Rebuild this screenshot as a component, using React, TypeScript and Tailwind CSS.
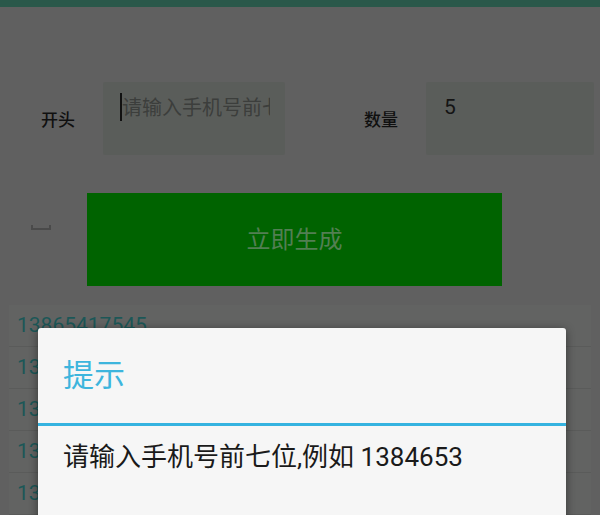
import React from "react";

const rows = ["13865417545", "13865413872", "13865419026", "13865412291", "13865418634"];

export default function App() {
  return (
    <div
      className="relative w-[600px] h-[515px] overflow-hidden bg-[#606060]"
      style={{ fontFamily: 'Roboto, "Noto Sans CJK SC", sans-serif' }}
    >
      <div className="h-[7px] bg-[#2a584a]" />
      <div className="mt-[75px] flex h-[73px] items-center">
        <div className="ml-[41px] w-[62px] pt-[3px] text-[17px] font-medium leading-none text-[#101010]">开头</div>
        <div className="flex h-[73px] w-[182px] items-start rounded-[2px] bg-[#5a5d5a] pl-[17px] pt-[11px]">
          <div className="h-[28px] w-[2px] bg-[#111]" />
          <div className="w-[148px] overflow-hidden whitespace-nowrap pt-[3px] text-[20px] leading-[24px] text-[#3c3e3c]">
            请输入手机号前七位
          </div>
        </div>
        <div className="ml-[79px] w-[62px] pt-[3px] text-[17px] font-medium leading-none text-[#101010]">数量</div>
        <div className="h-[73px] w-[168px] rounded-[2px] bg-[#5a5d5a] pl-[18px] pt-[13px] text-[21px] leading-[24px] text-[#141414]">
          5
        </div>
      </div>
      <div className="mt-[38px] flex h-[93px] items-center">
        <div className="ml-[31px] mt-[-25px] h-[5px] w-[20px] border-b-2 border-l-2 border-r-2 border-[#4a4a4a]" />
        <div className="ml-[36px] flex h-[93px] w-[415px] items-center justify-center bg-[#006300] text-[24px] text-[#527f53]">
          立即生成
        </div>
      </div>
      <div className="mx-[9px] mt-[19px] bg-[#626362]">
        {rows.map((r) => (
          <div
            key={r}
            className="flex h-[42px] items-center border-b border-[#5a5b5a] pl-[8px] text-[21px] text-[#1c5757]"
          >
            {r}
          </div>
        ))}
      </div>
      <div className="absolute left-[38px] top-[328px] h-[220px] w-[528px] rounded-[3px] bg-[#f6f6f6] shadow-[0_2px_10px_rgba(0,0,0,0.45)]">
        <div className="flex h-[95px] items-center pl-[25px] pt-[2px] text-[31px] text-[#3db5dd]">提示</div>
        <div className="h-[3px] bg-[#35b3e0]" />
        <div className="pl-[25px] pt-[16px] text-[26px] leading-[30px] text-[#1a1a1a]">
          请输入手机号前七位,例如 1384653
        </div>
      </div>
    </div>
  );
}
